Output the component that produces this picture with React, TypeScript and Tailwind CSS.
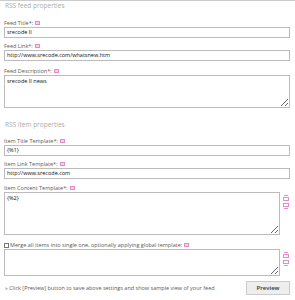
import React from 'react';

function Help() {
  return (
    <span className="inline-block ml-[2px] w-[5px] h-[4px] border border-[#e58bc6] bg-[#f7d3ea]" />
  );
}

function SideIcons() {
  return (
    <div className="flex flex-col gap-[2px] pt-[3px] w-[7px]">
      <svg width="6" height="6" viewBox="0 0 6 6">
        <rect x="0.5" y="2.5" width="5" height="3" fill="none" stroke="#e58bc6" />
        <line x1="1" y1="0.5" x2="5" y2="0.5" stroke="#e58bc6" />
      </svg>
      <svg width="6" height="6" viewBox="0 0 6 6">
        <rect x="0.5" y="0.5" width="5" height="3" fill="none" stroke="#e58bc6" />
        <line x1="1" y1="5.5" x2="5" y2="5.5" stroke="#e58bc6" />
      </svg>
    </div>
  );
}

function Label({ text, mt }: { text: string; mt: string }) {
  return (
    <div className={`${mt} h-[8px] flex items-center text-[5.5px] leading-[8px] text-[#5a5a5a]`}>
      {text}
      <Help />
    </div>
  );
}

function Input({ value }: { value: string }) {
  return (
    <div className="h-[11px] border border-[#bbb] px-[2px] text-[5.5px] leading-[9px] text-[#111] font-medium whitespace-nowrap overflow-hidden">
      {value}
    </div>
  );
}

function Area({ value, h }: { value: string; h: string }) {
  return (
    <textarea
      readOnly
      value={value}
      className={`w-full ${h} border border-[#bbb] px-[2px] py-[2px] text-[5.5px] leading-[7px] text-[#111] font-medium outline-none block resize-y`}
    />
  );
}

export default function App() {
  return (
    <div className="w-[295px] h-[300px] bg-white overflow-hidden border-t border-[#ccc]" style={{ fontFamily: '"Open Sans", "Liberation Sans", sans-serif' }}>
      <div className="pl-[4px] pr-[5px]">
        <div className="h-[9px] text-[6.5px] leading-[9px] text-[#aaa] pl-[1px]">RSS feed properties</div>

        <Label text="Feed Title*:" mt="mt-[9px]" />
        <Input value="srecode II" />
        <Label text="Feed Link*:" mt="mt-[4px]" />
        <Input value="http://www.srecode.com/whatsnew.htm" />
        <Label text="Feed Description*:" mt="mt-[6px]" />
        <Area value="srecode II news" h="h-[33px]" />

        <div className="mt-[12px] h-[9px] text-[6.5px] leading-[9px] text-[#aaa] pl-[1px]">RSS item properties</div>

        <Label text="Item Title Template*:" mt="mt-[8px]" />
        <Input value="{%1}" />
        <Label text="Item Link Template*:" mt="mt-[4px]" />
        <Input value="http://www.srecode.com" />
        <Label text="Item Content Template*:" mt="mt-[5px]" />
        <div className="flex gap-[3px]">
          <div className="flex-1">
            <Area value="{%2}" h="h-[43px]" />
          </div>
          <SideIcons />
        </div>

        <div className="mt-[6px] h-[8px] flex items-center text-[5.5px] leading-[8px] text-[#5a5a5a]">
          <span className="inline-block w-[5px] h-[5px] border border-[#777] mr-[1px]" />
          Merge all items into single one, optionally applying global template:
          <Help />
        </div>
        <div className="flex gap-[3px]">
          <div className="flex-1">
            <Area value="" h="h-[27px]" />
          </div>
          <SideIcons />
        </div>

        <div className="flex items-center justify-between mt-[5px]">
          <div className="text-[5.5px] leading-[8px] text-[#5a5a5a] pl-[1px]">» Click [Preview] button to save above settings and show sample view of your feed</div>
          <div className="w-[44px] h-[14px] border border-[#ccc] bg-[#eee] text-[6px] leading-[12px] text-center text-[#333] font-semibold">Preview</div>
        </div>
      </div>
    </div>
  );
}
